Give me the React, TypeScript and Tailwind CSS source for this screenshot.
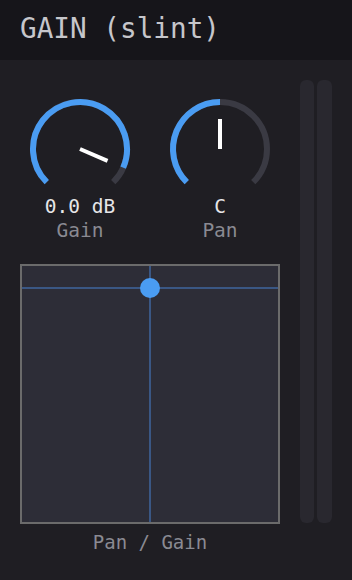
import { FC } from "react";

const BLUE = "#4a9cf2";
const TRACK = "#3a3a43";

// point on a circle, angle in degrees clockwise from 12 o'clock
const pt = (cx: number, cy: number, r: number, deg: number) => {
  const a = (deg * Math.PI) / 180;
  return [cx + r * Math.sin(a), cy - r * Math.cos(a)];
};

const arc = (cx: number, cy: number, r: number, from: number, to: number) => {
  const [x1, y1] = pt(cx, cy, r, from);
  const [x2, y2] = pt(cx, cy, r, to);
  const large = to - from > 180 ? 1 : 0;
  return `M ${x1} ${y1} A ${r} ${r} 0 ${large} 1 ${x2} ${y2}`;
};

const Knob: FC<{ value: number; text: string; label: string }> = ({ value, text, label }) => {
  const angle = -135 + 270 * value;
  const [lx, ly] = pt(53, 53, 30, angle);
  return (
    <div className="flex flex-col items-center">
      <svg width="106" height="99" viewBox="0 0 106 99">
        <path d={arc(53, 53, 47, -135, 135)} fill="none" stroke={TRACK} strokeWidth="6" />
        <path d={arc(53, 53, 47, -135, angle)} fill="none" stroke={BLUE} strokeWidth="6" />
        <line x1="53" y1="53" x2={lx} y2={ly} stroke="#ffffff" strokeWidth="4" />
      </svg>
      <div className="text-[19.5px] leading-[24px] text-[#e6e6e8]">{text}</div>
      <div className="text-[19.5px] leading-[24px] text-[#8a8a92]">{label}</div>
    </div>
  );
};

const XYPad: FC = () => (
  <div className="relative mx-[10px] h-[260px] w-[260px] border-2 border-[#6b6b6b] bg-[#2d2d37]">
    <div className="absolute left-[127px] top-0 h-full w-[2px] bg-[#3a5784]" />
    <div className="absolute left-0 top-[21px] h-[2px] w-full bg-[#3a5784]" />
    <div className="absolute left-[118px] top-[12px] h-[20px] w-[20px] rounded-full bg-[#4a9cf2]" />
  </div>
);

export default function App() {
  return (
    <div
      className="flex h-[580px] w-[352px] flex-col bg-[#1f1e23]"
      style={{ fontFamily: '"DejaVu Sans Mono", "Liberation Mono", monospace' }}
    >
      <header className="flex h-[60px] items-center bg-[#16151a] pl-[20px] pb-[2px]">
        <h1 className="text-[27.7px] text-[#c6c6cb]">GAIN (slint)</h1>
      </header>

      <main className="flex flex-1 pt-5">
        <div className="ml-[10px] flex w-[280px] flex-col">
          <div className="mt-4 grid grid-cols-2">
            <Knob value={0.92} text="0.0 dB" label="Gain" />
            <Knob value={0.5} text="C" label="Pan" />
          </div>
          <div className="mt-[21px]">
            <XYPad />
          </div>
          <div className="mt-[6px] text-center text-[19px] leading-[24px] text-[#8a8a92]">Pan / Gain</div>
        </div>

        <div className="ml-[10px] flex h-[443px] gap-[3px]">
          <div className="w-[14px] rounded-md bg-[#29282f]" />
          <div className="w-[15px] rounded-md bg-[#29282f]" />
        </div>
      </main>
    </div>
  );
}
